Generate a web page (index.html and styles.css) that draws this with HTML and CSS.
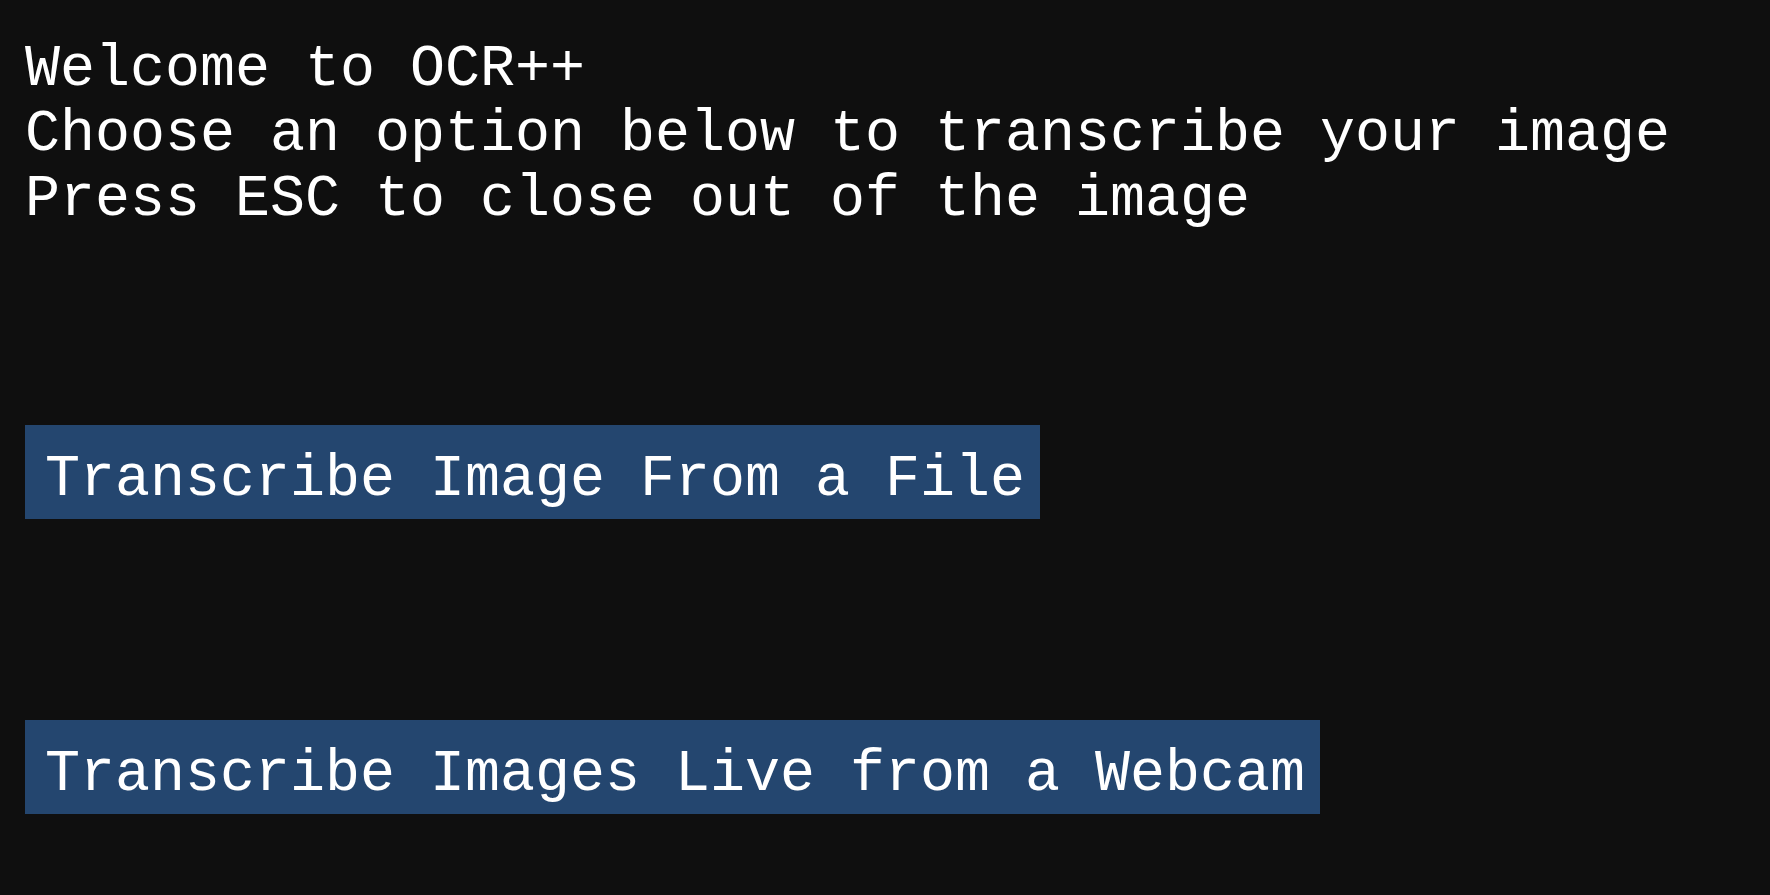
FILE: index.html
```html
<!DOCTYPE html>
<html lang="en">
<head>
<meta charset="utf-8">
<title>OCR++</title>
<link rel="stylesheet" href="styles.css">
</head>
<body>
<main class="window">
  <section class="intro">
    <div class="line">Welcome to OCR++</div>
    <div class="line">Choose an option below to transcribe your image</div>
    <div class="line">Press ESC to close out of the image</div>
  </section>
  <button class="btn btn-file">Transcribe Image From a File</button>
  <button class="btn btn-cam">Transcribe Images Live from a Webcam</button>
</main>
</body>
</html>
```

FILE: styles.css
```css
html, body {
  margin: 0;
  padding: 0;
  background: #0f0f0f;
}
body {
  width: 1770px;
  height: 895px;
  overflow: hidden;
  font-family: "Liberation Mono", "DejaVu Sans Mono", monospace;
  font-size: 58.333px;
  color: #ffffff;
}
.window {
  display: flex;
  flex-direction: column;
  align-items: flex-start;
  padding: 37px 0 0 25px;
}
.intro {
  display: flex;
  flex-direction: column;
}
.line {
  line-height: 65px;
  height: 65px;
  white-space: pre;
}
.btn {
  font: inherit;
  color: inherit;
  background: #24466f;
  border: 0;
  border-radius: 0;
  margin: 0;
  line-height: 65px;
  height: 94px;
  padding: 22px 15px 7px 20px;
  white-space: pre;
  text-align: left;
  cursor: default;
}
.btn-file {
  margin-top: 193px;
}
.btn-cam {
  margin-top: 201px;
}
```
